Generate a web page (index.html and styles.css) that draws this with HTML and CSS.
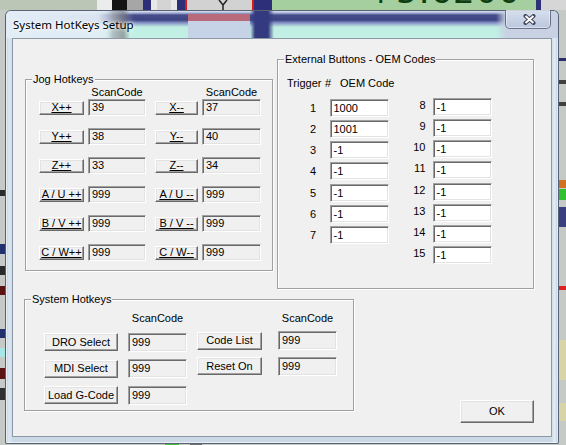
FILE: index.html
```html
<!DOCTYPE html>
<html lang="en">
<head>
    <meta charset="UTF-8">
    <title>System HotKeys Setup</title>
    <link rel="stylesheet" href="styles.css">
</head>
<body>
<div class="desktop">
    <!-- strip of the main screen showing above the dialog -->
    <div class="mach-top">
        <span class="seg seg-sage"></span>
        <span class="seg seg-light"></span>
        <span class="seg seg-black"></span>
        <span class="seg seg-grey"></span>
        <span class="seg seg-navy seg-icon"><span class="plug"></span></span>
        <span class="seg seg-jog">
            <svg width="12" height="10" viewBox="0 0 12 10"><path d="M2 0 L6 5 L10 0 M6 5 V10" stroke="#222" stroke-width="1.5" fill="none"/></svg>
        </span>
        <span class="seg seg-navy2"></span>
        <span class="seg dro"><span class="dro-value">+5.6200</span></span>
        <span class="seg seg-navy3"></span>
        <span class="seg seg-rest"></span>
    </div>

    <div class="window">
        <div class="titlebar">
            <span class="caption">System HotKeys Setup</span>
            <button class="close-btn" type="button">
                <svg width="13" height="11" viewBox="0 0 13 11">
                    <path d="M2.5 2 L10.5 9 M10.5 2 L2.5 9" stroke="#3b4254" stroke-width="4" stroke-linecap="round"/>
                    <path d="M2.5 2 L10.5 9 M10.5 2 L2.5 9" stroke="#fff" stroke-width="2"/>
                </svg>
            </button>
        </div>

        <div class="client">
            <div class="top-row">
                <div class="group jog">
                    <div class="group-title">Jog Hotkeys</div>
                    <div class="jog-grid jog-head">
                        <span></span><span>ScanCode</span><span></span><span>ScanCode</span>
                    </div>
                    <div class="jog-grid">
                        <button class="btn jog-btn">X++</button><div class="edit">39</div>
                        <button class="btn jog-btn minus">X--</button><div class="edit">37</div>
                        <button class="btn jog-btn">Y++</button><div class="edit">38</div>
                        <button class="btn jog-btn minus">Y--</button><div class="edit">40</div>
                        <button class="btn jog-btn">Z++</button><div class="edit">33</div>
                        <button class="btn jog-btn minus">Z--</button><div class="edit">34</div>
                        <button class="btn jog-btn">A / U ++</button><div class="edit">999</div>
                        <button class="btn jog-btn minus">A / U --</button><div class="edit">999</div>
                        <button class="btn jog-btn">B / V ++</button><div class="edit">999</div>
                        <button class="btn jog-btn minus">B / V --</button><div class="edit">999</div>
                        <button class="btn jog-btn">C / W++</button><div class="edit">999</div>
                        <button class="btn jog-btn minus">C / W--</button><div class="edit">999</div>
                    </div>
                </div>

                <div class="group oem">
                    <div class="group-title">External Buttons - OEM Codes</div>
                    <div class="oem-head">
                        <span class="trig">Trigger</span><span class="hash">#</span><span>OEM Code</span>
                    </div>
                    <div class="oem-body">
                        <div class="oem-col first">
                            <span class="num">1</span><div class="edit white">1000</div>
                            <span class="num">2</span><div class="edit white">1001</div>
                            <span class="num">3</span><div class="edit white">-1</div>
                            <span class="num">4</span><div class="edit white">-1</div>
                            <span class="num">5</span><div class="edit white">-1</div>
                            <span class="num">6</span><div class="edit white">-1</div>
                            <span class="num">7</span><div class="edit white">-1</div>
                        </div>
                        <div class="oem-col second">
                            <span class="num">8</span><div class="edit white">-1</div>
                            <span class="num">9</span><div class="edit white">-1</div>
                            <span class="num">10</span><div class="edit white">-1</div>
                            <span class="num">11</span><div class="edit white">-1</div>
                            <span class="num">12</span><div class="edit white">-1</div>
                            <span class="num">13</span><div class="edit white">-1</div>
                            <span class="num">14</span><div class="edit white">-1</div>
                            <span class="num">15</span><div class="edit white">-1</div>
                        </div>
                    </div>
                </div>
            </div>

            <div class="bottom-row">
                <div class="group sys">
                    <div class="group-title">System Hotkeys</div>
                    <div class="sys-body">
                        <div class="sys-col left">
                            <span></span><span class="col-head">ScanCode</span>
                            <button class="btn sys-btn">DRO Select</button><div class="edit">999</div>
                            <button class="btn sys-btn">MDI Select</button><div class="edit">999</div>
                            <button class="btn sys-btn">Load G-Code</button><div class="edit">999</div>
                        </div>
                        <div class="sys-col right">
                            <span></span><span class="col-head">ScanCode</span>
                            <button class="btn sys-btn">Code List</button><div class="edit">999</div>
                            <button class="btn sys-btn">Reset On</button><div class="edit">999</div>
                        </div>
                    </div>
                </div>
                <button class="btn ok-btn" type="button">OK</button>
            </div>
        </div>
    </div>
</div>
</body>
</html>
```

FILE: styles.css
```css
* {
    box-sizing: border-box;
}
body {
    margin: 0;
    font-family: "Liberation Sans", Arial, sans-serif;
    font-size: 11px;
    color: #000;
}

/* main screen behind the dialog */
.desktop {
    position: relative;
    width: 566px;
    height: 445px;
    overflow: hidden;
    background:
        linear-gradient(#2c2c2c, #2c2c2c) 0 190px / 5px 6px no-repeat,
        linear-gradient(#23306e, #23306e) 0 244px / 5px 10px no-repeat,
        linear-gradient(#2a2a2a, #2a2a2a) 0 266px / 5px 9px no-repeat,
        linear-gradient(#5a1414, #5a1414) 0 286px / 5px 9px no-repeat,
        linear-gradient(#23306e, #23306e) 0 329px / 5px 9px no-repeat,
        linear-gradient(#a8e6e6, #a8e6e6) 0 348px / 5px 9px no-repeat,
        linear-gradient(#5a1414, #5a1414) 0 368px / 5px 11px no-repeat,
        linear-gradient(#303030, #303030) 0 388px / 5px 12px no-repeat,
        linear-gradient(#2a2e66, #2a2e66) 558px 58px / 8px 3px no-repeat,
        linear-gradient(#404040, #404040) 558px 80px / 8px 4px no-repeat,
        linear-gradient(#404040, #404040) 558px 102px / 8px 4px no-repeat,
        linear-gradient(#d07020, #d07020) 558px 180px / 8px 8px no-repeat,
        linear-gradient(#30c030, #30c030) 558px 189px / 8px 11px no-repeat,
        linear-gradient(#3a3f80, #3a3f80) 558px 207px / 8px 20px no-repeat,
        linear-gradient(#e02020, #e02020) 558px 286px / 8px 4px no-repeat,
        linear-gradient(#d8d4a8, #d8d4a8) 558px 340px / 8px 40px no-repeat,
        linear-gradient(#d8d4a8, #d8d4a8) 558px 403px / 8px 18px no-repeat,
        linear-gradient(#707070, #707070) 190px 443px / 12px 2px no-repeat,
        linear-gradient(#40c040, #40c040) 165px 443px / 14px 2px no-repeat,
        #c6cac6;
}
.mach-top {
    display: flex;
    height: 10px;
    overflow: hidden;
}
.seg {
    height: 10px;
    flex: none;
}
.seg-sage { width: 97px; background: #bcc6b6; }
.seg-light { width: 15px; background: #ececec; }
.seg-black { width: 15px; background: #141414; }
.seg-grey { width: 16px; background: #a6a6a6; }
.seg-navy { width: 42px; background: #2d2f78; }
.seg-icon {
    display: flex;
    justify-content: center;
}
.plug {
    width: 26px;
    height: 10px;
    background: #d4d4d4;
    border-left: 6px solid #e8e8e8;
    border-right: 6px solid #e8e8e8;
}
.seg-jog {
    width: 69px;
    background: #d2d2d2;
    border-left: 2px solid #e01818;
    border-right: 2px solid #e01818;
    display: flex;
    justify-content: center;
    padding-left: 6px;
}
.seg-navy2 { width: 18px; background: #2d2f78; }
.dro {
    width: 264px;
    background: #a5cf9e;
    display: flex;
    justify-content: flex-end;
    padding-right: 15px;
}
.dro-value {
    font-family: "DejaVu Sans", sans-serif;
    font-size: 34px;
    line-height: 34px;
    margin-top: -26px;
    color: #0e3e12;
    letter-spacing: 1px;
}
.seg-navy3 { width: 5px; background: #2d2f78; }
.seg-rest { flex: 1; background: #d6d6d6; }

/* dialog window with aero frame */
.window {
    position: absolute;
    left: 5px;
    top: 10px;
    width: 554px;
    height: 434px;
    border: 1px solid rgba(50, 60, 80, 0.75);
    border-radius: 6px 6px 2px 2px;
    background: linear-gradient(to right, #bfcfdd, #dce8f2 3px, #cbd9e6 7px, #cbd9e6 calc(100% - 7px), #e2edf5 calc(100% - 3px), #b7c6d4);
    box-shadow: inset 0 0 0 1px rgba(255, 255, 255, 0.6);
    display: flex;
    flex-direction: column;
}
.titlebar {
    height: 27px;
    display: flex;
    align-items: flex-start;
    border-radius: 5px 5px 0 0;
    background:
        linear-gradient(to right, #e2edf6 0, rgba(226, 237, 246, 0.95) 92px, rgba(226, 237, 246, 0) 128px),
        linear-gradient(#b86a7a, #b86a7a) 182px 3px / 62px 7px no-repeat,
        linear-gradient(#c6d2e6, #c6d2e6) 182px 10px / 62px 17px no-repeat,
        linear-gradient(to right, transparent 100px, rgba(60, 60, 60, 0.6) 107px, rgba(60, 60, 60, 0.6) 117px, transparent 124px, transparent 244px, #343a80 249px, #343a80 262px, transparent 268px),
        linear-gradient(to right, transparent 490px, #c8d2e2 500px),
        linear-gradient(to bottom, #dfe6f2 0, #a6b0d4 2px, #454d8b 4px, #3c4482 9px, #8a96c8 12px, #bfeee2 16px, #c4f0e6 100%);
}
.caption {
    font-family: "Noto Sans", "Open Sans", sans-serif;
    font-size: 11.5px;
    line-height: 27px;
    margin-left: 7px;
    color: #000;
    text-shadow: 0 0 6px #fff, 0 0 3px #fff;
}
.close-btn {
    margin: -1px 7px 0 auto;
    width: 46px;
    height: 19px;
    padding: 0;
    border: 1px solid rgba(60, 70, 100, 0.7);
    border-top: none;
    border-radius: 0 0 5px 5px;
    background: linear-gradient(rgba(230, 236, 248, 0.55), rgba(170, 184, 214, 0.45));
    box-shadow: inset 0 0 0 1px rgba(255, 255, 255, 0.45);
    display: flex;
    align-items: center;
    justify-content: center;
}
.close-btn svg {
    display: block;
    margin-left: 2px;
}

.client {
    margin: 0 6px;
    height: 399px;
    background: #f0f0f0;
    border: 1px solid #8d98a6;
    display: flex;
    flex-direction: column;
}
.top-row,
.bottom-row {
    display: flex;
    align-items: flex-start;
}

/* etched group boxes */
.group {
    border: 1px solid #a0a0a0;
    box-shadow: inset 1px 1px 0 #fff, 1px 1px 0 #fff;
}
.group-title {
    width: fit-content;
    margin: -7px 0 0 6px;
    padding: 0 1px;
    line-height: 13px;
    background: #f0f0f0;
}

.btn {
    font-family: inherit;
    font-size: 11px;
    color: #000;
    padding: 0;
    background: #f0f0f0;
    border: 1px solid;
    border-color: #fff #696969 #696969 #fff;
    box-shadow: inset -1px -1px 0 #a0a0a0, inset 1px 1px 0 #e3e3e3;
    line-height: 1;
}
.edit {
    height: 17px;
    padding: 0 0 0 3px;
    line-height: 15px;
    background: #f0f0f0;
    border: 1px solid;
    border-color: #a0a0a0 #fff #fff #a0a0a0;
    box-shadow: inset 1px 1px 0 #696969, inset -1px -1px 0 #e3e3e3;
}
.edit.white {
    background: #fff;
}

/* jog keys */
.jog {
    width: 248px;
    height: 192px;
    margin: 40px 0 0 12px;
}
.jog-grid {
    display: grid;
    grid-template-columns: 45px 58px 48px 59px;
    column-gap: 4px;
    row-gap: 12px;
    grid-auto-rows: 17px;
    padding-left: 13px;
}
.jog-head {
    grid-auto-rows: 13px;
    line-height: 13px;
    text-align: center;
}
.jog-btn {
    height: 14px;
    align-self: center;
    text-decoration: underline;
}
.jog-btn.minus {
    width: 43px;
    justify-self: end;
}

/* external OEM buttons */
.oem {
    width: 257px;
    height: 230px;
    margin: 20px 0 0 4px;
}
.oem-head {
    display: flex;
    margin: 11px 0 0 9px;
    line-height: 13px;
}
.oem-head .trig {
    width: 38px;
}
.oem-head .hash {
    width: 15px;
}
.oem-body {
    display: flex;
    align-items: flex-start;
}
.oem-col {
    display: grid;
    grid-template-columns: 20px 59px;
    grid-auto-rows: 18px;
    row-gap: 3.17px;
}
.oem-col .edit {
    height: 18px;
    line-height: 16px;
}
.num {
    text-align: right;
    line-height: 18px;
}
.oem-col.first {
    margin: 9px 0 0 18px;
    column-gap: 13.5px;
}
.oem-col.second {
    margin: 8px 0 0 17px;
    column-gap: 7px;
}
.oem-col.second .num {
    line-height: 15px;
}

/* system keys */
.sys {
    width: 330px;
    height: 112px;
    margin: 10px 0 0 11px;
}
.sys-body {
    display: flex;
    align-items: flex-start;
    margin-top: 6px;
    padding-left: 19px;
}
.sys-col {
    display: grid;
    grid-template-rows: 13px;
    grid-auto-rows: 19px;
    align-items: center;
}
.sys-col.left {
    grid-template-columns: 74px 59px;
    column-gap: 10px;
    row-gap: 7.5px;
}
.sys-col.right {
    grid-template-columns: 65px 59px;
    column-gap: 16px;
    row-gap: 6.25px;
    margin-left: 10px;
}
.col-head {
    text-align: center;
    line-height: 13px;
}
.sys-col .edit {
    height: 19px;
    line-height: 17px;
}
.sys-btn {
    height: 18px;
}

.ok-btn {
    width: 74px;
    height: 23px;
    margin: 111px 0 0 106px;
}
```
